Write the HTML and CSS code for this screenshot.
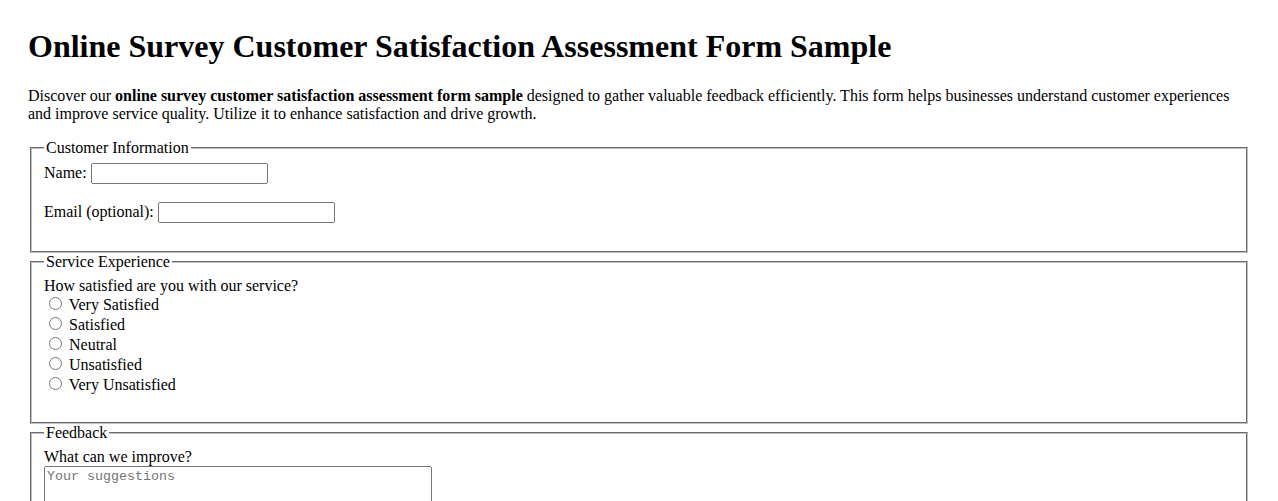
FILE: index.html
```html
<!DOCTYPE html>
<html lang="en">
<head>
<meta charset="utf-8">
<title>Online Survey Customer Satisfaction Assessment Form Sample</title>
<link rel="stylesheet" href="styles.css">
</head>
<body>
<h1 class="title">Online Survey Customer Satisfaction Assessment Form Sample</h1>
<p class="intro">Discover our <strong>online survey customer satisfaction assessment form sample</strong> designed to gather valuable feedback efficiently. This form helps businesses understand customer experiences and improve service quality. Utilize it to enhance satisfaction and drive growth.</p>
<form class="survey">
  <fieldset class="section">
    <legend>Customer Information</legend>
    <div class="group">
      <label for="name">Name:</label> <input class="text-input" type="text" id="name" name="name">
    </div>
    <div class="group">
      <label for="email">Email (optional):</label> <input class="text-input" type="email" id="email" name="email">
    </div>
  </fieldset>
  <fieldset class="section">
    <legend>Service Experience</legend>
    <div class="group">
      <span class="question question-tight">How satisfied are you with our service?</span>
      <label class="option"><input type="radio" name="sat" value="5"> Very Satisfied</label>
      <label class="option"><input type="radio" name="sat" value="4"> Satisfied</label>
      <label class="option"><input type="radio" name="sat" value="3"> Neutral</label>
      <label class="option"><input type="radio" name="sat" value="2"> Unsatisfied</label>
      <label class="option"><input type="radio" name="sat" value="1"> Very Unsatisfied</label>
    </div>
  </fieldset>
  <fieldset class="section">
    <legend>Feedback</legend>
    <div class="group">
      <label class="question" for="improve">What can we improve?</label>
      <textarea class="text-area" id="improve" name="improve" rows="5" placeholder="Your suggestions"></textarea>
    </div>
  </fieldset>
</form>
</body>
</html>
```
FILE: styles.css
```css
html, body {
  background: #ffffff;
}
body {
  margin: 0;
  padding: 28px 28px 20px;
  font-family: "Liberation Serif", "Times New Roman", serif;
  font-size: 16px;
  color: #000000;
}
.title {
  margin: 0 0 22.44px;
  font-size: 32px;
  font-weight: bold;
}
.intro {
  margin: 16px 0;
  line-height: normal;
}
.section {
  margin: 0 2px;
  padding: 5.6px 12px 10px;
  border: 2px groove #c0c0c0;
}
.section legend {
  padding: 0 2px;
}
.group {
  margin-bottom: 18px;
}
.question {
  display: block;
}
.question-tight {
  line-height: 17.4px;
}
.option {
  display: block;
  height: 20px;
}
.text-input {
  width: 177px;
  height: 21px;
  box-sizing: border-box;
  font-size: 13.33px;
}
.text-area {
  display: block;
  width: 388px;
  height: 80px;
  box-sizing: border-box;
  font-family: "Liberation Mono", "DejaVu Sans Mono", monospace;
  font-size: 13.33px;
}
```
